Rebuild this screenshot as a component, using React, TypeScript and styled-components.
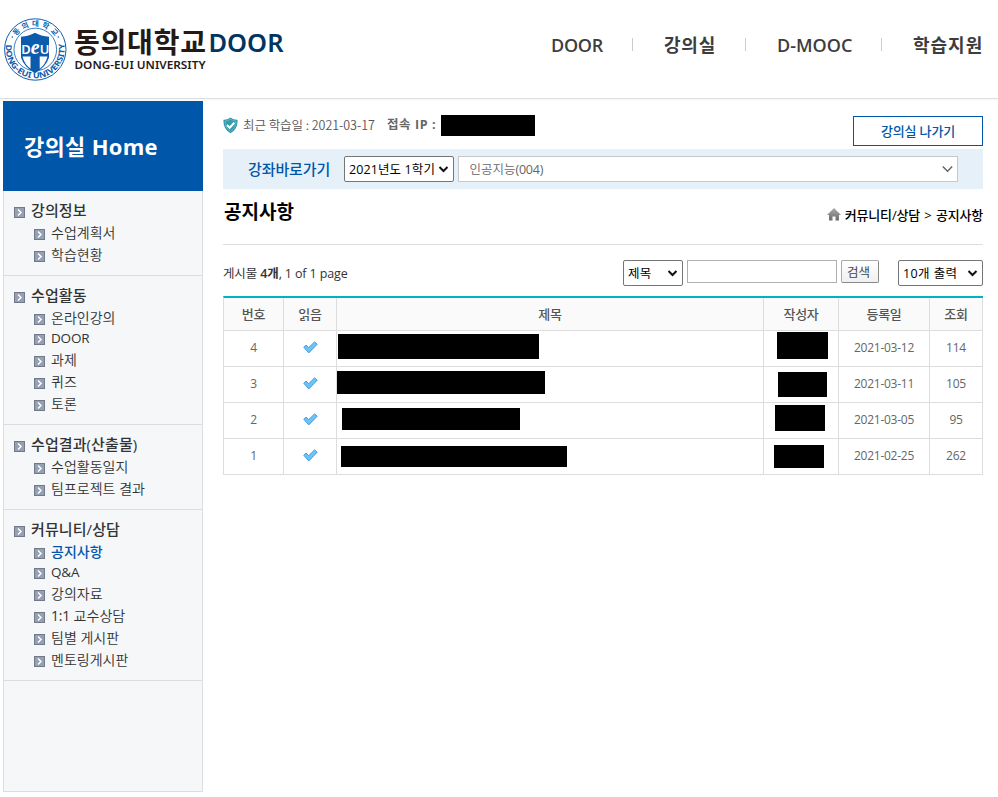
import React from 'react';
import styled, { createGlobalStyle } from 'styled-components';

const GlobalStyle = createGlobalStyle`
  * { box-sizing: border-box; }
  body {
    margin: 0;
    background: #fff;
    color: #333;
    font: 12px/18px "Open Sans", "Noto Sans CJK KR", sans-serif;
    overflow: hidden;
  }
  h1, h2 { margin: 0; }
  svg { display: block; flex: none; }
`;

const Page = styled.div`
  width: 998px;
  height: 797px;
  overflow: hidden;
`;

const Header = styled.header`
  display: flex;
  justify-content: space-between;
  height: 99px;
  border-bottom: 1px solid #ddd;
`;

const HeaderShade = styled.div`
  height: 2px;
  background: #fafafa;
`;

const Nav = styled.nav`
  display: flex;
  align-items: center;
  height: 90px;
  padding-right: 14px;
`;

const NavItem = styled.a<{ $width: number; $spacing?: number }>`
  width: ${(p) => p.$width}px;
  font-size: 18px;
  font-weight: 600;
  line-height: 24px;
  color: #3d3d3d;
  white-space: nowrap;
  letter-spacing: ${(p) => p.$spacing ?? 0}px;
`;

const NavDivider = styled.span<{ $before: number; $after: number }>`
  width: 1px;
  height: 13px;
  margin: 0 ${(p) => p.$after}px 1px ${(p) => p.$before}px;
  background: #ccc;
`;

const Body = styled.div`
  display: flex;
  padding-left: 3px;
  gap: 20px;
`;

const Sidebar = styled.aside`
  width: 200px;
  height: 691px;
  background: #f5f7f9;
  border: 1px solid #ddd;
  border-top: 0;
`;

const HomeBanner = styled.h1`
  height: 90px;
  margin: 0 -1px;
  padding-left: 21px;
  background: #0056a8;
  color: #fff;
  font-size: 22px;
  font-weight: 700;
  line-height: 90px;
  letter-spacing: 0.3px;
`;

const MenuSection = styled.section`
  padding: 8px 0 10px 10px;
  border-bottom: 1px solid #ddd;
`;

const MenuRow = styled.div<{ $sub?: boolean; $latin?: boolean; $active?: boolean }>`
  display: flex;
  align-items: flex-end;
  height: ${(p) => (p.$latin ? 20 : 22)}px;
  padding-left: ${(p) => (p.$sub ? 20 : 0)}px;
  gap: 6px;
  font-size: ${(p) => (p.$sub ? 14 : 15)}px;
  font-weight: ${(p) => (!p.$sub || p.$active ? 500 : p.$latin ? 400 : 350)};
  color: ${(p) => (p.$active ? '#0056a8' : '#333')};
  svg { margin-bottom: 3px; }
`;

const MenuLabel = styled.a<{ $sub?: boolean; $latin?: boolean }>`
  font-family: ${(p) => (p.$latin ? '"Open Sans"' : '"Open Sans", "Noto Sans CJK KR"')}, sans-serif;
  font-size: ${(p) => (p.$latin ? '13.5px' : 'inherit')};
  line-height: ${(p) => (p.$sub ? 20 : 22)}px;
  white-space: nowrap;
  letter-spacing: ${(p) => (p.$latin ? -0.2 : p.$sub ? 0.02 : 0.1)}px;
`;

const Digits = styled.span`
  font-weight: 400;
  letter-spacing: -0.25px;
`;

const Main = styled.main`
  width: 760px;
`;

const InfoRow = styled.div`
  display: flex;
  align-items: center;
  height: 48px;
  color: #666;
`;

const StudyDate = styled.span`
  width: 144px;
  margin-left: 5px;
  color: #555;
  font: 350 12.5px/18px "Noto Sans CJK KR", sans-serif;
  letter-spacing: -0.05px;
  white-space: nowrap;
`;

const AccessIp = styled.span`
  width: 54px;
  font-weight: 700;
  font-size: 12.5px;
  letter-spacing: 0.6px;
  white-space: nowrap;
`;

const Redaction = styled.span<{ $w: number; $h: number; $left?: number; $top?: number }>`
  display: block;
  flex: none;
  width: ${(p) => p.$w}px;
  height: ${(p) => p.$h}px;
  margin: ${(p) => p.$top ?? 0}px 0 0 ${(p) => p.$left ?? 0}px;
  background: #000;
`;

const ExitButton = styled.button`
  width: 130px;
  height: 30px;
  margin: 12px 0 0 auto;
  padding: 0;
  border: 1px solid #0056a8;
  background: #fff;
  color: #0056a8;
  font: 500 13px/28px "Open Sans", "Noto Sans CJK KR", sans-serif;
  letter-spacing: -0.15px;
`;

const CourseBar = styled.div`
  display: flex;
  align-items: center;
  height: 40px;
  padding: 0 25px;
  background: #e6f0f9;
`;

const CourseLabel = styled.strong`
  width: 96px;
  padding-bottom: 1px;
  color: #0056a8;
  font-size: 15px;
  font-weight: 500;
  letter-spacing: -0.1px;
`;

const Picker = styled.div<{ $w: number; $light?: boolean; $gap?: number }>`
  display: flex;
  flex: none;
  align-items: center;
  justify-content: space-between;
  width: ${(p) => p.$w}px;
  height: 26px;
  margin-right: ${(p) => p.$gap ?? 0}px;
  padding: 0 4px 0 ${(p) => (p.$light ? 10.5 : 4)}px;
  border: 1px solid ${(p) => (p.$light ? '#c8c8c8' : '#767676')};
  border-radius: ${(p) => (p.$light ? 0 : 2)}px;
  background: #fff;
  color: ${(p) => (p.$light ? '#666' : '#000')};
  font-size: 12.5px;
  font-weight: ${(p) => (p.$light ? 350 : 400)};
  white-space: nowrap;
`;

const PickerText = styled.span<{ $spacing?: number }>`
  padding-top: 1px;
  letter-spacing: ${(p) => p.$spacing ?? 0}px;
`;

const TitleRow = styled.div`
  display: flex;
  justify-content: space-between;
  height: 56px;
  border-bottom: 1px solid #ddd;
`;

const PageTitle = styled.h2`
  padding: 10px 0 0 1px;
  color: #000;
  font-size: 19px;
  font-weight: 700;
  line-height: 26px;
`;

const Breadcrumb = styled.div`
  display: flex;
  align-items: center;
  height: 20px;
  margin-top: 16px;
  gap: 4px;
  color: #000;
  font-weight: 500;
  font-size: 13px;
  letter-spacing: -0.2px;
  word-spacing: 1.2px;
  white-space: nowrap;
  svg { margin-bottom: 1px; }
`;

const SearchRow = styled.div`
  display: flex;
  align-items: flex-start;
  height: 51px;
  padding-top: 15px;
`;

const PostCount = styled.p`
  margin: 5px auto 0 0;
  font-size: 12.5px;
  font-weight: 400;
  letter-spacing: -0.13px;
  strong { font-weight: 600; }
`;

const SearchInput = styled.input`
  width: 150px;
  height: 23px;
  margin: 0 4px;
  padding: 0 4px;
  border: 1px solid #b0b0b0;
`;

const SearchButton = styled.button`
  width: 38px;
  height: 23px;
  margin-right: 19px;
  padding: 0 3px 0 0;
  border: 1px solid #aaa;
  border-right-color: #888;
  border-bottom-color: #888;
  border-radius: 2px;
  background: linear-gradient(#fff, #f0f0f0);
  color: #444;
  font: 400 12.5px/20px "Noto Sans CJK KR", sans-serif;
`;

const Board = styled.div`
  border-top: 2px solid #00b2c2;
  border-left: 1px solid #ddd;
`;

const BoardRow = styled.div<{ $head?: boolean }>`
  display: grid;
  grid-template-columns: 60px 53px 427px 75px 91px 53px;
  height: ${(p) => (p.$head ? 33 : 36)}px;
  background: ${(p) => (p.$head ? '#fafafa' : '#fff')};
  font-size: ${(p) => (p.$head ? 13 : 12)}px;
  font-weight: ${(p) => (p.$head ? 500 : 400)};
  color: ${(p) => (p.$head ? '#555' : '#666')};
`;

const Cell = styled.div<{ $start?: boolean; $lift?: boolean }>`
  display: flex;
  align-items: ${(p) => (p.$start ? 'flex-start' : 'center')};
  justify-content: ${(p) => (p.$start ? 'flex-start' : 'center')};
  padding-bottom: ${(p) => (p.$lift ? 2 : 0)}px;
  border-right: 1px solid #ddd;
  border-bottom: 1px solid #ddd;
  letter-spacing: -0.25px;
  white-space: nowrap;
`;

const Logo = () => (
  <svg width="290" height="92" viewBox="0 0 290 92">
    <defs>
      <path id="sealTop" d="M12 49.500 A23.300 23.300 0 0 1 58.600 49.500" />
      <path id="sealBottom" d="M6.600 42.500 A29.400 29.400 0 1 0 64 42.500" />
    </defs>
    <circle cx="35.300" cy="49.500" r="30.700" fill="#fff" stroke="#0c5cad" strokeWidth="1" />
    <circle cx="35.300" cy="49.500" r="21.300" fill="#fff" stroke="#0c5cad" strokeWidth=".8" />
    <g fill="#0c5cad">
      <path d="M35 32.800Q41 36.400 49 36.800V57.500Q46 67 35 73.300Q24 67 21 57.500V36.800Q29 36.400 35 32.800Z" />
      <path d="M22.500 56.500H30.500V68.700Q24.500 64.500 22.500 56.500ZM39.700 56.500H47.500Q45.500 64.500 39.700 68.700Z" fill="#fff" />
      <circle cx="12.300" cy="37" r=".8" />
      <circle cx="58.300" cy="37" r=".8" />
      <text fontFamily="Noto Sans CJK KR" fontWeight="700" fontSize="7.400">
        <textPath href="#sealTop" startOffset="14" textLength="45">동의대학교</textPath>
      </text>
      <text fontFamily="Noto Sans" fontWeight="700" fontSize="8">
        <textPath href="#sealBottom" startOffset="2" textLength="102" lengthAdjust="spacingAndGlyphs">DONG-EUI UNIVERSITY</textPath>
      </text>
    </g>
    <text x="21.300" y="53.500" fill="#fff" fontFamily="Noto Sans" fontWeight="600" fontSize="13" textLength="28" lengthAdjust="spacingAndGlyphs">
      D<tspan fontFamily="Liberation Serif" fontStyle="italic" fontWeight="700" fontSize="20">e</tspan>U
    </text>
    <text x="74" y="53" fontFamily="Noto Sans CJK KR" fontWeight="700" fontSize="28" fill="#251916" textLength="132">동의대학교</text>
    <text x="74.500" y="69" fontFamily="Noto Sans" fontWeight="600" fontSize="11" fill="#251916" textLength="131" lengthAdjust="spacingAndGlyphs">DONG-EUI UNIVERSITY</text>
    <text x="208.500" y="52" fontFamily="Noto Sans" fontWeight="600" fontSize="26" fill="#003561" textLength="75" lengthAdjust="spacingAndGlyphs">DOOR</text>
  </svg>
);

const Bullet = () => (
  <svg width="11" height="11" viewBox="0 0 11 11">
    <rect x=".5" y=".5" width="10" height="10" fill="#97a0b2" stroke="#707a8b" />
    <path d="M4 2.500L7 5.500L4 8.500" fill="none" stroke="#fff" strokeWidth="1.500" />
  </svg>
);

const Shield = () => (
  <svg width="15" height="17" viewBox="0 0 15 17">
    <path d="M7.500 .5Q10.500 3 14.500 2.800Q15.200 12 7.500 16.300Q-.2 12 .5 2.800Q4.500 3 7.500 .5Z" fill="#2f93a5" />
    <path d="M7.500 2Q10 4 13 4Q13.300 11 7.500 14.500Q1.700 11 2 4Q5 4 7.500 2Z" fill="#389bad" stroke="#79cbd6" strokeWidth=".6" />
    <path d="M4 8L6.700 10.700L11.300 5.700" fill="none" stroke="#fff" strokeWidth="2" />
  </svg>
);

const Check = () => (
  <svg width="15" height="13" viewBox="0 0 15 13">
    <path d="M.8 6.300L3 4.100L5.700 6.700L11.600 .9L14.200 3.200L5.800 11.900Z" fill="#65c8f7" stroke="#4a94dc" strokeWidth="1" strokeLinejoin="round" />
  </svg>
);

const HomeIcon = () => (
  <svg width="14" height="13" viewBox="0 0 14 13">
    <defs>
      <linearGradient id="roof" x1="0" y1="0" x2="0" y2="1">
        <stop offset="0" stopColor="#aaa" />
        <stop offset="1" stopColor="#6b6b6b" />
      </linearGradient>
    </defs>
    <path d="M7 0L14 7H12V12.500H8.500V8.500H5.500V12.500H2V7H0Z" fill="url(#roof)" />
  </svg>
);

const Caret = ({ light = false }: { light?: boolean }) => (
  <svg width="11" height="8" viewBox="0 0 11 8">
    <path
      d={light ? 'M.8 1.500L5.500 6.200L10.200 1.500' : 'M1.500 2L5.500 6L9.500 2'}
      fill="none"
      stroke={light ? '#666' : '#111'}
      strokeWidth={light ? 1.5 : 2}
    />
  </svg>
);

type Item = { label: string; prefix?: string; latin?: boolean; active?: boolean };
const menu: { title: string; items: Item[] }[] = [
  { title: '강의정보', items: [{ label: '수업계획서' }, { label: '학습현황' }] },
  {
    title: '수업활동',
    items: [{ label: '온라인강의' }, { label: 'DOOR', latin: true }, { label: '과제' }, { label: '퀴즈' }, { label: '토론' }],
  },
  { title: '수업결과(산출물)', items: [{ label: '수업활동일지' }, { label: '팀프로젝트 결과' }] },
  {
    title: '커뮤니티/상담',
    items: [
      { label: '공지사항', active: true },
      { label: 'Q&A', latin: true },
      { label: '강의자료' },
      { prefix: '1:1', label: ' 교수상담' },
      { label: '팀별 게시판' },
      { label: '멘토링게시판' },
    ],
  },
];

type Box = { left: number; top: number; w: number; h: number };
const posts: { no: number; date: string; views: number; title: Box; author: Box }[] = [
  { no: 4, date: '2021-03-12', views: 114, title: { left: 1, top: 3, w: 201, h: 25 }, author: { left: 13, top: 1, w: 51, h: 27 } },
  { no: 3, date: '2021-03-11', views: 105, title: { left: 0, top: 4, w: 208, h: 23 }, author: { left: 14, top: 5, w: 49, h: 25 } },
  { no: 2, date: '2021-03-05', views: 95, title: { left: 5, top: 5, w: 178, h: 22 }, author: { left: 11, top: 2, w: 50, h: 26 } },
  { no: 1, date: '2021-02-25', views: 262, title: { left: 4, top: 7, w: 226, h: 21 }, author: { left: 10, top: 6, w: 50, h: 23 } },
];

const Hidden = ({ box }: { box: Box }) => <Redaction $w={box.w} $h={box.h} $left={box.left} $top={box.top} />;

export default function App() {
  return (
    <Page>
      <GlobalStyle />
      <Header>
        <Logo />
        <Nav>
          <NavItem $width={54} $spacing={-0.25}>DOOR</NavItem>
          <NavDivider $before={27} $after={31} />
          <NavItem $width={52} $spacing={0.8}>강의실</NavItem>
          <NavDivider $before={29} $after={31} />
          <NavItem $width={76} $spacing={0}>D-MOOC</NavItem>
          <NavDivider $before={28} $after={31} />
          <NavItem $width={71} $spacing={1}>학습지원</NavItem>
        </Nav>
      </Header>
      <HeaderShade />
      <Body>
        <Sidebar>
          <HomeBanner>강의실 Home</HomeBanner>
          {menu.map((section) => (
            <MenuSection key={section.title}>
              <MenuRow>
                <Bullet />
                <MenuLabel>{section.title}</MenuLabel>
              </MenuRow>
              {section.items.map((item) => (
                <MenuRow key={item.label} $sub $latin={item.latin} $active={item.active}>
                  <Bullet />
                  <MenuLabel $sub $latin={item.latin}>
                    {item.prefix && <Digits>{item.prefix}</Digits>}
                    {item.label}
                  </MenuLabel>
                </MenuRow>
              ))}
            </MenuSection>
          ))}
        </Sidebar>
        <Main>
          <InfoRow>
            <Shield />
            <StudyDate>최근 학습일 : 2021-03-17</StudyDate>
            <AccessIp>접속 IP :</AccessIp>
            <Redaction $w={94} $h={21} />
            <ExitButton>강의실 나가기</ExitButton>
          </InfoRow>
          <CourseBar>
            <CourseLabel>강좌바로가기</CourseLabel>
            <Picker $w={110} $gap={4}>
              <PickerText $spacing={0.1}>2021년도 1학기</PickerText>
              <Caret />
            </Picker>
            <Picker $w={500} $light>
              <PickerText>인공지능<Digits>(004)</Digits></PickerText>
              <Caret light />
            </Picker>
          </CourseBar>
          <TitleRow>
            <PageTitle>공지사항</PageTitle>
            <Breadcrumb>
              <HomeIcon />
              <span>커뮤니티/상담 &gt; 공지사항</span>
            </Breadcrumb>
          </TitleRow>
          <SearchRow>
            <PostCount>게시물 <strong>4개</strong>, 1 of 1 page</PostCount>
            <Picker $w={60}>
              <PickerText $spacing={0.3}>제목</PickerText>
              <Caret />
            </Picker>
            <SearchInput />
            <SearchButton>검색</SearchButton>
            <Picker $w={85}>
              <PickerText $spacing={0.4}>10개 출력</PickerText>
              <Caret />
            </Picker>
          </SearchRow>
          <Board>
            <BoardRow $head>
              {['번호', '읽음', '제목', '작성자', '등록일', '조회'].map((h) => (
                <Cell key={h}>{h}</Cell>
              ))}
            </BoardRow>
            {posts.map((p) => (
              <BoardRow key={p.no}>
                <Cell $lift>{p.no}</Cell>
                <Cell $lift><Check /></Cell>
                <Cell $start><Hidden box={p.title} /></Cell>
                <Cell $start><Hidden box={p.author} /></Cell>
                <Cell $lift>{p.date}</Cell>
                <Cell $lift>{p.views}</Cell>
              </BoardRow>
            ))}
          </Board>
        </Main>
      </Body>
    </Page>
  );
}
